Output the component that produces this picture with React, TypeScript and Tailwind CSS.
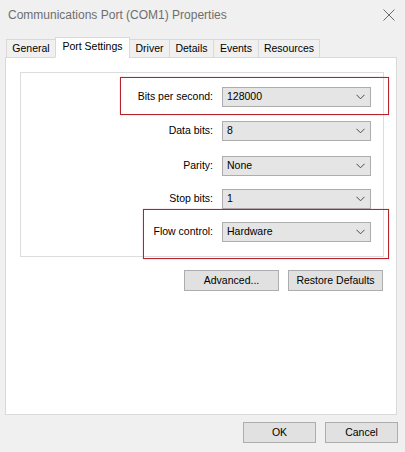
import React from 'react';

const tabs = [
    { label: "General", w: "w-[50px]" },
    { label: "Port Settings", w: "w-[75px]", active: true },
    { label: "Driver", w: "w-[41px]" },
    { label: "Details", w: "w-[45px]" },
    { label: "Events", w: "w-[46px]" },
    { label: "Resources", w: "w-[62px]" },
];

const fields = [
    { label: "Bits per second:", value: "128000", mt: "mt-[14px]" },
    { label: "Data bits:", value: "8", mt: "mt-[14px]" },
    { label: "Parity:", value: "None", mt: "mt-[15px]" },
    { label: "Stop bits:", value: "1", mt: "mt-[13px]" },
    { label: "Flow control:", value: "Hardware", mt: "mt-[13px]" },
];

const Chevron = () => (
    <svg width="9" height="6" viewBox="0 0 9 6" className="shrink-0">
        <path d="M0.5 0.8 L4.5 4.8 L8.5 0.8" fill="none" stroke="#4a4a4a" strokeWidth="1" />
    </svg>
);

const Button = ({ label, w }: { label: string; w: string }) => (
    <div className={`${w} h-[21px] flex items-center justify-center bg-[#e1e1e1] border border-[#adadad] text-[10.5px] text-black`}>
        {label}
    </div>
);

const App: React.FC = () => {
    return (
        <div className="relative w-[405px] h-[452px] bg-[#f0f0f0] overflow-hidden" style={{ fontFamily: '"Liberation Sans", Arial, sans-serif' }}>
            {/* title bar */}
            <div className="h-[30px] flex items-center justify-between pl-[8px] pr-[10px]">
                <span className="text-[12px] text-[#6e6e6e]">Communications Port (COM1) Properties</span>
                <svg width="12" height="12" viewBox="0 0 12 12">
                    <path d="M0.5 0.5 L11.5 11.5 M11.5 0.5 L0.5 11.5" stroke="#6a6a6a" strokeWidth="1" />
                </svg>
            </div>

            {/* tabs */}
            <div className="mt-[7px] pl-[6px] flex items-end relative z-10 -mb-px">
                {tabs.map((t) => (
                    <div
                        key={t.label}
                        className={
                            t.active
                                ? `${t.w} h-[21px] bg-white border border-[#d9d9d9] border-b-white flex items-center justify-center pb-[2px] text-[10.5px] text-black -ml-px`
                                : `${t.w} h-[19px] bg-[#f0f0f0] border border-[#d9d9d9] border-b-[#d9d9d9] flex items-center justify-center text-[10.5px] text-black -ml-px first:ml-0`
                        }
                    >
                        {t.label}
                    </div>
                ))}
            </div>

            {/* panel */}
            <div className="ml-[5px] w-[392px] h-[358px] bg-white border border-[#d9d9d9] flex flex-col">
                <div className="ml-[14px] mt-[14px] w-[364px] h-[185px] border border-[#dcdcdc] flex flex-col pr-[12px]">
                    {fields.map((f) => (
                        <div key={f.label} className={`${f.mt} flex items-center justify-end`}>
                            <span className="text-[10.5px] text-black mr-[9px]">{f.label}</span>
                            <div className="w-[149px] h-[20px] bg-[#e5e5e5] border border-[#adadad] flex items-center justify-between pl-[4px] pr-[5px]">
                                <span className="text-[10.5px] text-black">{f.value}</span>
                                <Chevron />
                            </div>
                        </div>
                    ))}
                </div>
                <div className="mt-[13px] mr-[13px] flex justify-end gap-[9px]">
                    <Button label="Advanced..." w="w-[95px]" />
                    <Button label="Restore Defaults" w="w-[95px]" />
                </div>
            </div>

            {/* dialog buttons */}
            <div className="mt-[7px] mr-[7px] flex justify-end gap-[9px]">
                <Button label="OK" w="w-[73px]" />
                <Button label="Cancel" w="w-[73px]" />
            </div>

            {/* highlight boxes */}
            <div className="absolute left-[120px] top-[77px] w-[269px] h-[38px] border border-[#b8232b] shadow-[0_0_1px_#e0888c]" />
            <div className="absolute left-[143px] top-[209px] w-[246px] h-[50px] border border-[#b8232b] shadow-[0_0_1px_#e0888c]" />
        </div>
    );
};

export default App;
